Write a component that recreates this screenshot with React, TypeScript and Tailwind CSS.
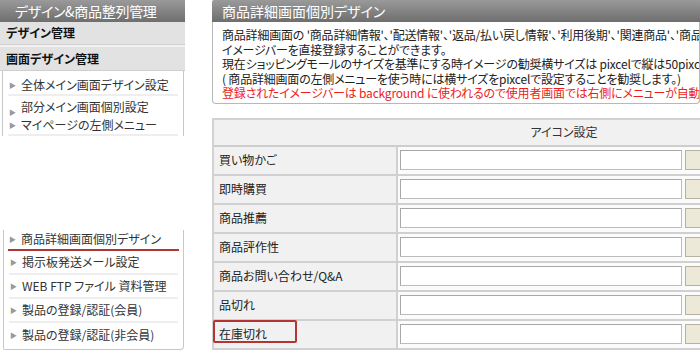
const jp = "[font-family:'Noto_Sans_CJK_JP','Noto_Sans',sans-serif] [font-feature-settings:'palt']";

const Bullet = () => <span className="text-[7px] text-[#999] mr-[5px] leading-none">▶</span>;

const SideItem = ({ label, sep = true }: { label: string; sep?: boolean }) => (
  <div className={`mx-[5px] h-[24px] flex items-center pl-[1px] text-[12px] text-[#333] ${sep ? "border-b-2 border-[#eeeeee]" : ""}`}>
    <Bullet />
    {label}
  </div>
);

const rows = ["買い物かご", "即時購買", "商品推薦", "商品評作性", "商品お問い合わせ/Q&A", "品切れ", "在庫切れ"];

export default function App() {
  return (
    <div className={`w-[700px] h-[350px] bg-white overflow-hidden flex ${jp}`}>
      {/* left menu */}
      <div className="w-[212px] shrink-0 flex flex-col">
        <div className="w-[185px]">
          <div className="h-[22px] bg-gradient-to-b from-[#9a9a9a] to-[#6e6e6e] text-white text-[14px] pl-[15px] flex items-center tracking-[-0.3px]">
            デザイン&商品整列管理
          </div>
          <div className="h-[23px] bg-[#e2e2e2] border-b border-[#cfcfcf] flex items-center pl-[6px] text-[12px] font-bold text-[#111]">
            デザイン管理
          </div>
          <div className="h-[2px] bg-[#f2f2f2]" />
          <div className="h-[24px] bg-[#e2e2e2] border-b border-[#cfcfcf] flex items-center pl-[6px] text-[12px] font-bold text-[#111]">
            画面デザイン管理
          </div>
          <div className="ml-[2px] w-[182px] border-x border-[#c8c8c8] pt-[5px]">
            <div className="mx-[5px] h-[20px] flex items-center pl-[1px] text-[12px] text-[#333] border-b-2 border-[#eeeeee]">
              <Bullet />全体メイン画面デザイン設定
            </div>
            <div className="mx-[5px] h-[20px] flex items-end pl-[1px] text-[12px] text-[#333]">
              <Bullet />部分メイン画面個別設定
            </div>
            <div className="mx-[5px] h-[20px] flex items-center pl-[1px] text-[12px] text-[#333] border-b-2 border-[#eeeeee]">
              <Bullet />マイページの左側メニュー
            </div>
          </div>
        </div>

        <div className="mt-[94px] ml-[3px] w-[181px] h-[121px] border-x border-b border-[#c8c8c8] rounded-br-[4px] rounded-bl-[2px]">
          <div className="mx-[4px] h-[21px] flex items-start pl-[1px] text-[12px] text-[#333] border-b-2 border-[#b03535]">
            <span className="flex items-center">
              <Bullet />商品詳細画面個別デザイン
            </span>
          </div>
          <SideItem label="掲示板発送メール設定" />
          <SideItem label="WEB FTP ファイル 資料管理" />
          <SideItem label="製品の登録/認証(会員)" />
          <SideItem label="製品の登録/認証(非会員)" sep={false} />
        </div>
      </div>

      {/* main panel */}
      <div className="flex-1 min-w-0 overflow-hidden">
        <div className="h-[22px] bg-gradient-to-b from-[#9a9a9a] to-[#6e6e6e] text-white text-[14px] pl-[10px] flex items-center rounded-tl-[2px]">
          商品詳細画面個別デザイン
        </div>
        <div className="border border-t-0 border-[#b8b8b8] rounded-b-[4px] pl-[9px] pt-[6px] pb-[2px] text-[12px] leading-[14.5px] text-[#222] whitespace-nowrap overflow-hidden tracking-[-0.2px]">
          <div>商品詳細画面の '商品詳細情報'、'配送情報'、'返品/払い戻し情報'、'利用後期'、'関連商品'、'商品お問い合わせ' の</div>
          <div>イメージバーを直接登録することができます。</div>
          <div>現在ショッピングモールのサイズを基準にする時イメージの勧奨横サイズは pixcelで縦は50pixcelで固定されます。</div>
          <div>( 商品詳細画面の左側メニューを使う時には横サイズをpixcelで設定することを勧奨します。)</div>
          <div className="text-[#ee1c1c]">登録されたイメージバーは background に使われるので使用者画面では右側にメニューが自動出力されます。</div>
        </div>

        <div className="mt-[14px] w-[702px] border-t-2 border-l-2 border-[#d2d2d2]">
          <div className="h-[27px] bg-[#f1f1f1] border-b-2 border-[#cdcdcd] flex items-center justify-center text-[12px] text-[#333]">
            アイコン設定
          </div>
          {rows.map((r, i) => (
            <div key={r} className="h-[29px] flex border-b-2 border-[#d0d0d0]">
              <div className="relative w-[184px] shrink-0 bg-[#f1f1f1] border-r-2 border-[#d0d0d0] flex items-center pl-[5px] text-[12px] text-[#222]">
                {r}
                {i === rows.length - 1 && (
                  <div className="absolute left-[-1px] top-[-1px] w-[84px] h-[23px] border-2 border-[#b43434] rounded-[2px]" />
                )}
              </div>
              <div className="flex-1 bg-[#fbfbfb] flex items-center pl-[2px] gap-[3px]">
                <div className="w-[282px] h-[20px] bg-white border border-[#bcbcbc] border-t-[#a8a8a8] border-l-[#a8a8a8]" />
                <div className="w-[40px] h-[20px] bg-[#ece9d8] border border-[#b5b2a2]" />
              </div>
            </div>
          ))}
        </div>
      </div>
    </div>
  );
}
